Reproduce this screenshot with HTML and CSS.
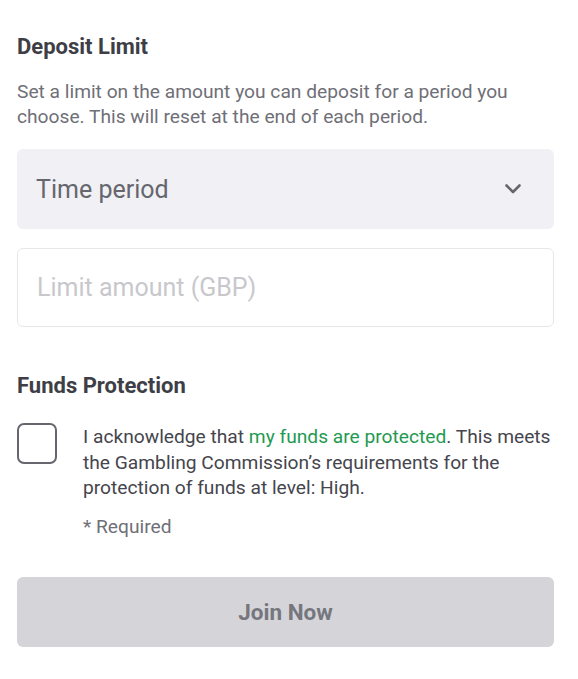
FILE: index.html
```html
<!DOCTYPE html>
<html lang="en">

<head>
    <meta charset="UTF-8">
    <meta name="viewport" content="width=device-width, initial-scale=1.0">
    <title>Deposit Limit</title>
    <link rel="stylesheet" href="styles.css">
</head>

<body>

    <div class="container">
        <form id="limitsForm">
            <h2 class="section-title">Deposit Limit</h2>
            <p class="section-text">Set a limit on the amount you can deposit for a period you choose. This will reset at the end of each period.</p>

            <div class="select-box">
                <select id="period" name="period">
                    <option value="">Time period</option>
                    <option value="day">Daily</option>
                    <option value="week">Weekly</option>
                    <option value="month">Monthly</option>
                </select>
                <svg class="chevron" width="18" height="12" viewBox="0 0 18 12">
                    <path d="M2.5 2.5 L9 9 L15.5 2.5" fill="none" stroke="#66666e" stroke-width="2.6" stroke-linecap="round" stroke-linejoin="round" />
                </svg>
            </div>

            <input type="text" class="amount" id="amount" name="amount" placeholder="Limit amount (GBP)">

            <h2 class="section-title funds-title">Funds Protection</h2>

            <div class="check-row">
                <input type="checkbox" id="funds" name="funds">
                <div class="check-text">
                    <label for="funds">I acknowledge that <a href="#">my funds are protected</a>. This meets the Gambling Commission’s requirements for the protection of funds at level: High.</label>
                    <div class="required">* Required</div>
                </div>
            </div>

            <button type="submit" class="join" disabled>Join Now</button>
        </form>
    </div>

</body>

</html>
```

FILE: styles.css
```css
body {
    margin: 0;
    font-family: Roboto, "Liberation Sans", Arial, sans-serif;
    background-color: #fff;
}

.container {
    padding: 35px 24px 0 17px;
}

.section-title {
    margin: 0;
    font-size: 22px;
    line-height: 24px;
    font-weight: bold;
    color: #3e3e46;
}

.section-text {
    margin: 20px 0 0;
    font-size: 19.2px;
    line-height: 25px;
    color: #6f6f77;
}

.select-box {
    position: relative;
    margin-top: 20px;
}

select {
    display: block;
    width: 100%;
    height: 80px;
    padding: 0 19px;
    border: none;
    border-radius: 6px;
    background-color: #f1f1f5;
    font-family: inherit;
    font-size: 25px;
    color: #66666e;
    appearance: none;
    -webkit-appearance: none;
}

.chevron {
    position: absolute;
    right: 32px;
    top: 34px;
    pointer-events: none;
}

.amount {
    display: block;
    width: 100%;
    height: 79px;
    margin-top: 19px;
    padding: 0 19px;
    border: 1px solid #e7e7eb;
    border-radius: 6px;
    box-sizing: border-box;
    font-family: inherit;
    font-size: 25px;
    color: #3e3e46;
}

.amount::placeholder {
    color: #c8c8cc;
}

.funds-title {
    margin-top: 47px;
}

.check-row {
    display: flex;
    gap: 26px;
    margin-top: 26px;
}

.check-row input[type="checkbox"] {
    appearance: none;
    -webkit-appearance: none;
    flex: none;
    width: 40px;
    height: 41px;
    margin: -1px 0 0;
    border: 2.5px solid #66666e;
    border-radius: 7px;
    box-sizing: border-box;
}

.check-text label {
    display: block;
    font-size: 19.2px;
    line-height: 25.5px;
    color: #45454d;
}

.check-text a {
    color: #1f9a52;
    text-decoration: none;
}

.required {
    margin-top: 13px;
    font-size: 19.2px;
    line-height: 25px;
    color: #6f6f77;
}

.join {
    display: block;
    width: 100%;
    height: 70px;
    margin-top: 38px;
    border: none;
    border-radius: 6px;
    background-color: #d5d5d9;
    font-family: inherit;
    font-size: 22.5px;
    font-weight: bold;
    color: #76767e;
}
```
